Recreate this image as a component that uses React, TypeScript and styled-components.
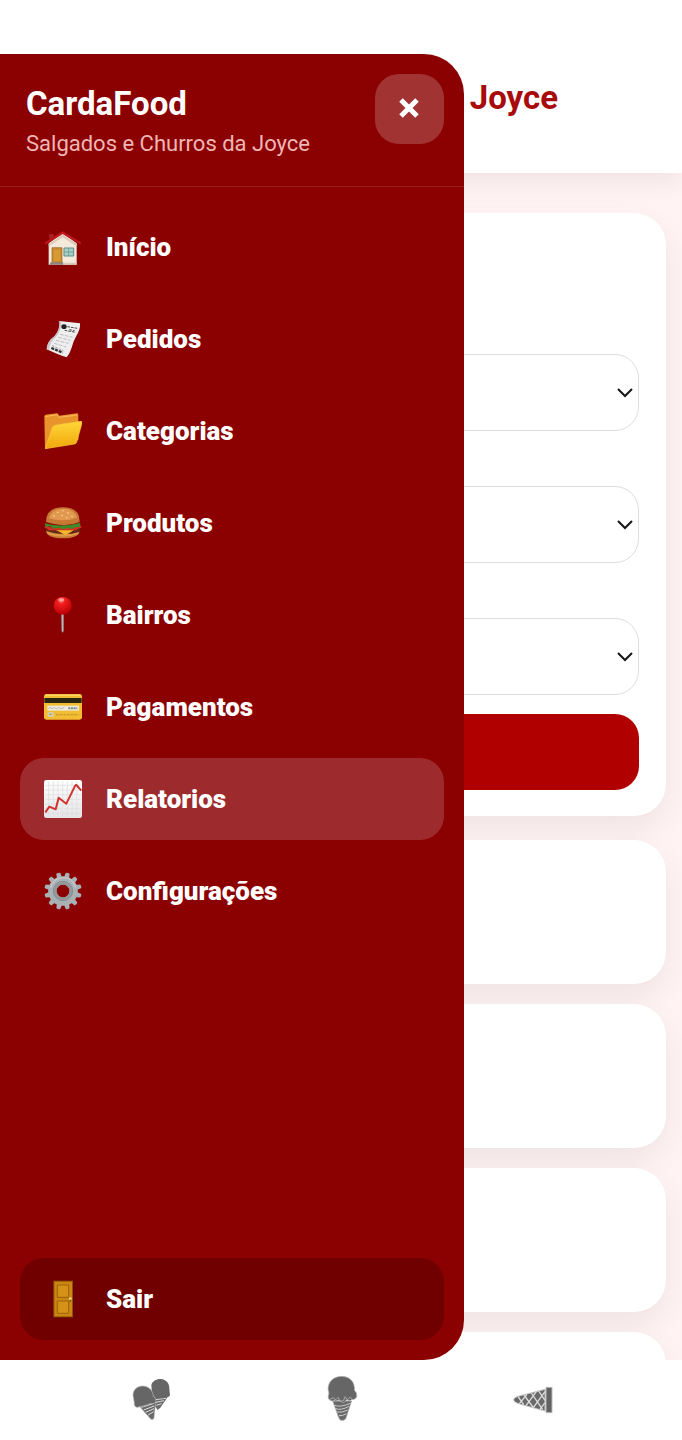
import React from "react";
import styled, { createGlobalStyle } from "styled-components";

const GlobalStyle = createGlobalStyle`
  *, *::before, *::after { box-sizing: border-box; }
  body { margin: 0; background: #fff; font-family: Roboto, "Liberation Sans", sans-serif; }
  button, select { font: inherit; }
`;

const Shell = styled.div`
  display: flex;
  flex-direction: column;
  height: 100vh;
  padding-top: 54px;
  background: #fff;
`;

const Stage = styled.div`
  position: relative;
  flex: 1;
  min-height: 0;
  overflow: hidden;
  background: #fff3f4;
`;

const PageHeader = styled.header`
  position: relative;
  z-index: 1;
  display: flex;
  justify-content: flex-end;
  height: 119px;
  padding: 24px 124px 0 0;
  background: #fff;
  box-shadow: 0 8px 24px rgba(0, 0, 0, 0.07);
`;

const PageTitle = styled.h2`
  margin: 0;
  font-size: 33px;
  line-height: 40px;
  font-weight: 700;
  color: #a80b0b;
`;

const Content = styled.main`
  display: flex;
  flex-direction: column;
  gap: 20px;
  padding: 40px 16px 24px;
`;

const Card = styled.section`
  flex: none;
  min-height: 144px;
  border-radius: 32px;
  background: #fff;
  box-shadow: 0 12px 32px rgba(0, 0, 0, 0.07);
`;

const FilterCard = styled(Card)`
  display: flex;
  flex-direction: column;
  gap: 55px;
  margin-bottom: 4px;
  padding: 141px 27px 26px;
`;

const SelectField = styled.div`
  display: grid;
  align-items: center;

  & > * { grid-area: 1 / 1; }
  & > svg { justify-self: end; margin-right: 6px; pointer-events: none; }
`;

const Select = styled.select`
  appearance: none;
  width: 100%;
  height: 77px;
  padding: 0 32px 0 24px;
  border: 1px solid #dedede;
  border-radius: 24px;
  background: #fff;
  font-size: 26px;
`;

const ApplyButton = styled.button`
  height: 76px;
  margin-top: -36px;
  border: 0;
  border-radius: 24px;
  background: #b00000;
`;

const Drawer = styled.aside`
  position: absolute;
  z-index: 2;
  inset: 0 auto 0 0;
  display: flex;
  flex-direction: column;
  width: 68%;
  border-radius: 0 40px 40px 0;
  background: #8b0000;
  color: #fff;
  overflow: hidden;
`;

const DrawerHeader = styled.header`
  display: flex;
  justify-content: space-between;
  align-items: flex-start;
  height: 133px;
  padding: 20px 20px 0 26px;
  border-bottom: 1px solid rgba(255, 255, 255, 0.12);
`;

const Brand = styled.div`
  padding-top: 10px;
`;

const BrandName = styled.h1`
  margin: 0;
  font-size: 33px;
  line-height: 40px;
  font-weight: 700;
`;

const BrandSub = styled.p`
  margin: 0;
  font-size: 22px;
  line-height: 40px;
  color: #f0b6b6;
`;

const CloseButton = styled.button`
  display: grid;
  place-items: center;
  width: 69px;
  height: 70px;
  padding: 0 0 2px;
  border: 0;
  border-radius: 24px;
  background: rgba(255, 255, 255, 0.2);
`;

const Menu = styled.nav`
  display: flex;
  flex: 1;
  flex-direction: column;
  gap: 10px;
  padding: 19px 20px 20px;
`;

const itemColors = { plain: "transparent", active: "#9d2b2d", exit: "#700000" };

const MenuItem = styled.a<{ $tone?: keyof typeof itemColors }>`
  display: flex;
  flex: none;
  align-items: center;
  gap: 24px;
  height: 82px;
  padding: 0 24px;
  border-radius: 24px;
  background: ${(p) => itemColors[p.$tone ?? "plain"]};
  color: #fff;
  font-size: 26px;
  line-height: 32px;
  font-weight: 900;
  text-decoration: none;
  ${(p) => p.$tone === "exit" && "margin-top: auto;"}
`;

const Emoji = styled.svg.attrs({ viewBox: "0 0 114 114", "aria-hidden": true })`
  flex: none;
  width: 38px;
  height: 38px;
`;

const BottomBar = styled.nav`
  display: grid;
  grid-template-columns: repeat(3, 1fr);
  flex: none;
  height: 80px;
  padding: 0 54px 0 56px;
  background: #fff;
`;

const BarButton = styled.button`
  display: grid;
  place-items: center;
  padding: 0 0 4px;
  border: 0;
  background: none;
`;

const ConeIcon = styled.svg.attrs({ viewBox: "0 0 138 138", "aria-hidden": true })`
  width: 46px;
  height: 46px;
`;

const House = () => (
  <Emoji>
    <path d="M16 18h13v20H16z" fill="#a82322" />
    <path d="M14 46 56 14l42 32v64H14z" fill="#f3eadb" />
    <path d="M14 48 56 20l42 28v7L56 28 14 55z" fill="#d8c9b8" />
    <path d="M2 44 52 12q4-3 8 0l52 32-3 5-53-32L5 49z" fill="#c8191e" stroke="#a80d12" strokeWidth="2" />
    <path d="M24 59h30v45H24z" fill="#c98b2e" stroke="#9a6420" strokeWidth="2" />
    <path d="M29 65h20v34H29z" fill="#d99a35" />
    <path d="M20 103h38v7H16z" fill="#8d8580" />
    <path d="M60 60h29v24H60z" fill="#a9cfca" stroke="#5e8f8b" strokeWidth="3" />
    <path d="M74 60v24M60 72h29" stroke="#5e8f8b" strokeWidth="2" />
    <path d="M58 104h40v6H58z" fill="#d6c9b9" />
  </Emoji>
);

const Receipt = () => (
  <Emoji>
    <path d="M46 3 108 10C110 28 100 42 92 58 84 74 83 94 68 112 50 107 28 96 8 88 10 70 16 60 30 50 42 40 48 24 46 3z" fill="#eeeeef" />
    <path d="M46 3q3 24-15 46Q10 63 8 88l7 3q2-24 20-39Q53 33 52 4z" fill="#c9c6ca" />
    <ellipse cx="60" cy="20" rx="8" ry="7" fill="#222" />
    <path d="m70 20 30 5M62 31l33 6M76 29l16 3" stroke="#4b4b4b" strokeWidth="3" strokeDasharray="8 3" />
    <path d="m48 43 38 9M43 52l36 9M36 61l38 9M30 70l37 11" stroke="#a3a3a6" strokeWidth="2" strokeDasharray="11 4" />
    <path d="m24 77 34 15" stroke="#999" strokeWidth="3" strokeDasharray="7 4" />
    <path d="m22 84 34 14" stroke="#333" strokeWidth="7" strokeDasharray="9 3" />
  </Emoji>
);

const Folder = () => (
  <Emoji>
    <defs>
      <linearGradient id="folderFront" x1="0" y1="0" x2="0" y2="1">
        <stop offset="0" stopColor="#ffd73a" /><stop offset="1" stopColor="#f0a60a" />
      </linearGradient>
    </defs>
    <path d="M1 14q0-5 4-6l34-4q3 0 6 7l54-7q4 0 4 5v75L3 110z" fill="#e9942a" />
    <path d="M4 14 39 8l6 8 55-7" fill="none" stroke="#f7b95a" strokeWidth="3" />
    <path d="M25 47q2-6 8-7l78-12q4 0 3 6L98 90q-1 5-6 6L4 110z" fill="url(#folderFront)" stroke="#f9c83c" strokeWidth="2" />
  </Emoji>
);

const Burger = () => (
  <Emoji>
    <path d="M6 80q4 23 51 23t50-23z" fill="#c67a32" />
    <path d="M7 83q50 16 99 0l-3 8q-47 14-92 0z" fill="#df9a4b" />
    <path d="M4 69q52 19 106-1l-2 15Q57 99 7 81z" fill="#642914" />
    <path d="m28 74 72-3-24 16-13 7-14-9z" fill="#f4b62b" />
    <path d="M3 65q54 17 108-1l1 7-11 3-4 5H14l-6-6-6-1z" fill="#cf3124" />
    <path d="M2 58q54 14 107-2l-2 13-13 1-11 5-12-4-13 5-14-5-15 3-10-7-14 1z" fill="#3e8b27" />
    <path d="M6 54q0-44 51-44t50 44Q61 73 6 54z" fill="#c77835" />
    <path d="M14 43q8-29 43-29t42 27Q60 56 14 43z" fill="#e1994f" />
    <g fill="#f8d295">
      <ellipse cx="41" cy="25" rx="3" ry="2" /><ellipse cx="57" cy="20" rx="3" ry="2" />
      <ellipse cx="72" cy="27" rx="3" ry="2" /><ellipse cx="30" cy="36" rx="3" ry="2" />
      <ellipse cx="54" cy="35" rx="3" ry="2" /><ellipse cx="84" cy="37" rx="3" ry="2" />
      <ellipse cx="68" cy="41" rx="3" ry="2" />
    </g>
  </Emoji>
);

const Pin = () => (
  <Emoji>
    <defs>
      <radialGradient id="pinBall" cx="0.42" cy="0.22" r="0.75">
        <stop offset="0" stopColor="#ff8d86" /><stop offset="0.25" stopColor="#f3201f" /><stop offset="1" stopColor="#bd0006" />
      </radialGradient>
    </defs>
    <path d="M51 50h9v54l-4 7-4-7z" fill="#8f7779" />
    <path d="M54 53h3v54h-3z" fill="#c7b3b5" />
    <circle cx="56" cy="29" r="27" fill="url(#pinBall)" />
    <ellipse cx="52" cy="11" rx="9" ry="5" fill="#ffb3ad" opacity="0.75" />
  </Emoji>
);

const CreditCard = () => (
  <Emoji>
    <rect x="0" y="18" width="114" height="77" rx="7" fill="#f2bd33" />
    <path d="M3 23q2-3 6-3h97q4 0 5 3z" fill="#ffdc72" />
    <path d="M1 30h112v15H1z" fill="#282613" />
    <path d="M10 53h95v15H10z" fill="#eeeada" />
    <path d="m13 64 6-7 5 6 7-5 6 5 7-4 8 3 9-4" fill="none" stroke="#9b9b9b" strokeWidth="2" />
    <path d="M73 61h27" stroke="#7d8b8d" strokeWidth="6" strokeDasharray="6 2" />
    <rect x="11" y="73" width="18" height="13" rx="2" fill="#cfd2c0" />
    <path d="M15 79h10M36 80h68" stroke="#c79a28" strokeWidth="4" strokeDasharray="8 3" />
  </Emoji>
);

const Chart = () => (
  <Emoji>
    <defs>
      <linearGradient id="chartPaper" x1="0" y1="0" x2="0" y2="1">
        <stop offset="0" stopColor="#ffffff" /><stop offset="1" stopColor="#e5e5e7" />
      </linearGradient>
    </defs>
    <rect x="0" y="0" width="114" height="114" rx="7" fill="url(#chartPaper)" />
    <path d="M14 3v108M28 3v108M42 3v108M56 3v108M70 3v108M84 3v108M98 3v108M3 16h108M3 30h108M3 44h108M3 58h108M3 72h108M3 86h108M3 100h108" stroke="#dcdcdf" strokeWidth="2" />
    <path d="m4 97 12-17 19 8 9-35 23 18 27-55q3-3 6 2l12 14" fill="none" stroke="#cf3430" strokeWidth="6" strokeLinejoin="round" />
  </Emoji>
);

const Gear = () => (
  <Emoji>
    <g fill="#aab1b5">
      {Array.from({ length: 12 }, (_, i) => (
        <path key={i} d="M49 18 51 3q1-2 3-2h6q2 0 3 2l2 15z" transform={`rotate(${i * 30 + 15} 57 57)`} />
      ))}
    </g>
    <circle cx="57" cy="57" r="32" fill="none" stroke="#aab1b5" strokeWidth="25" />
    <circle cx="57" cy="57" r="29" fill="none" stroke="#7f8b90" strokeWidth="3" />
    <circle cx="57" cy="57" r="24" fill="none" stroke="#92979a" strokeWidth="9" />
    <path d="M20 47q9-29 37-30t38 29" fill="none" stroke="#c3c8ca" strokeWidth="4" />
  </Emoji>
);

const Door = () => (
  <Emoji>
    <path d="M28 2h59v110H28z" fill="#8a520a" />
    <path d="M31 5h53v104H31z" fill="#cc8612" />
    <path d="M40 15h34v37H40zM40 63h34v37H40z" fill="#d49217" stroke="#9d620b" strokeWidth="3" />
    <circle cx="79" cy="56" r="4" fill="#e9db8b" />
    <path d="M79 59v7" stroke="#6c521c" strokeWidth="3" />
  </Emoji>
);

const Cross = () => (
  <svg width="20" height="20" viewBox="0 0 20 20" aria-hidden="true">
    <path d="m2 2 16 16M18 2 2 18" stroke="#fff" strokeWidth="5" />
  </svg>
);

const Chevron = () => (
  <svg width="16" height="10" viewBox="0 0 16 10" aria-hidden="true">
    <path d="m1 1 7 7 7-7" fill="none" stroke="#161616" strokeWidth="2" />
  </svg>
);

const TwinCones = () => (
  <ConeIcon>
    <path d="M80 67 121 63 98 97 89 105 79 91z" fill="#696969" />
    <path d="m82 74 32-4M84 82l24-5M85 91l16-5" stroke="#ddd" strokeWidth="3" />
    <path d="M70 29c4-11 16-18 28-17 17 1 27 14 26 29l2 20c-5 9-14 2-17 7-5 5-11-1-16 2-8 2-14-5-21-9z" fill="#666" />
    <path d="M34 94 83 78 78 130q-5 7-11 1z" fill="#696969" stroke="#bbb" strokeWidth="2" />
    <path d="m40 97 38-12M47 105l31-12M53 112l25-11M59 121l18-11" stroke="#ddd" strokeWidth="3" />
    <path d="M15 62C14 44 29 32 45 33c19 1 30 14 31 31 9 6 10 15 4 20-6 4-13 0-17 3-5 6-10 1-14 5-6 4-11 0-16 4-9 4-16-4-14-12z" fill="#666" stroke="#bbb" strokeWidth="2" />
  </ConeIcon>
);

const SingleCone = () => (
  <ConeIcon>
    <path d="M41 78h57L81 130q-4 9-16 6-4-1-8-13z" fill="#696969" stroke="#bbb" strokeWidth="2" />
    <path d="M45 91q20 7 49-6M49 101q18 6 41-7M54 111q16 3 32-6M60 122q10 2 22-6" fill="none" stroke="#ccc" strokeWidth="3" />
    <path d="M27 43C27 19 45 4 68 4c24 0 40 16 39 43 8 7 8 19 3 23-5 6-12 2-16 7-7 1-8-4-12-2-5 9-13 9-19 2-6-4-12 4-17-1-6 4-16 1-18-6-2-9 3-12 1-19z" fill="#666" stroke="#bbb" strokeWidth="2" />
    <path d="m30 74 14-6 5 7 8-8 7 12 10-3 4-11 7 9 9-8 7 8" fill="none" stroke="#c4c4c4" strokeWidth="2" />
  </ConeIcon>
);

const SideCone = () => (
  <ConeIcon>
    <path d="M105 43 31 62Q9 68 11 75q1 7 21 13l73 20z" fill="#696969" stroke="#c5c5c5" strokeWidth="3" />
    <path d="m25 66 16 23M42 60l29 39M64 54l34 50M86 48l19 28M28 86l23-28M48 92l31-42M70 98l35-48M90 103l15-20" stroke="#ddd" strokeWidth="4" />
    <path d="M108 37h18v76h-18z" fill="#626262" stroke="#bbb" strokeWidth="3" />
  </ConeIcon>
);

const menuEntries = [
  { label: "Início", Icon: House },
  { label: "Pedidos", Icon: Receipt },
  { label: "Categorias", Icon: Folder },
  { label: "Produtos", Icon: Burger },
  { label: "Bairros", Icon: Pin },
  { label: "Pagamentos", Icon: CreditCard },
  { label: "Relatorios", Icon: Chart, active: true },
  { label: "Configurações", Icon: Gear },
];

const filters = ["Período", "Status", "Pagamento"];
const barItems = [
  { label: "Recentes", Icon: TwinCones },
  { label: "Tela inicial", Icon: SingleCone },
  { label: "Voltar", Icon: SideCone },
];

export default function App() {
  return (
    <>
      <GlobalStyle />
      <Shell>
        <Stage>
          <PageHeader>
            <PageTitle>Joyce</PageTitle>
          </PageHeader>
          <Content>
            <FilterCard>
              {filters.map((name) => (
                <SelectField key={name}>
                  <Select aria-label={name} />
                  <Chevron />
                </SelectField>
              ))}
              <ApplyButton type="button" aria-label="Filtrar" />
            </FilterCard>
            <Card />
            <Card />
            <Card />
            <Card />
          </Content>
          <Drawer>
            <DrawerHeader>
              <Brand>
                <BrandName>CardaFood</BrandName>
                <BrandSub>Salgados e Churros da Joyce</BrandSub>
              </Brand>
              <CloseButton type="button" aria-label="Fechar menu">
                <Cross />
              </CloseButton>
            </DrawerHeader>
            <Menu>
              {menuEntries.map(({ label, Icon, active }) => (
                <MenuItem key={label} href="#" $tone={active ? "active" : "plain"}>
                  <Icon />
                  {label}
                </MenuItem>
              ))}
              <MenuItem href="#" $tone="exit">
                <Door />
                Sair
              </MenuItem>
            </Menu>
          </Drawer>
        </Stage>
        <BottomBar>
          {barItems.map(({ label, Icon }) => (
            <BarButton key={label} type="button" aria-label={label}>
              <Icon />
            </BarButton>
          ))}
        </BottomBar>
      </Shell>
    </>
  );
}
